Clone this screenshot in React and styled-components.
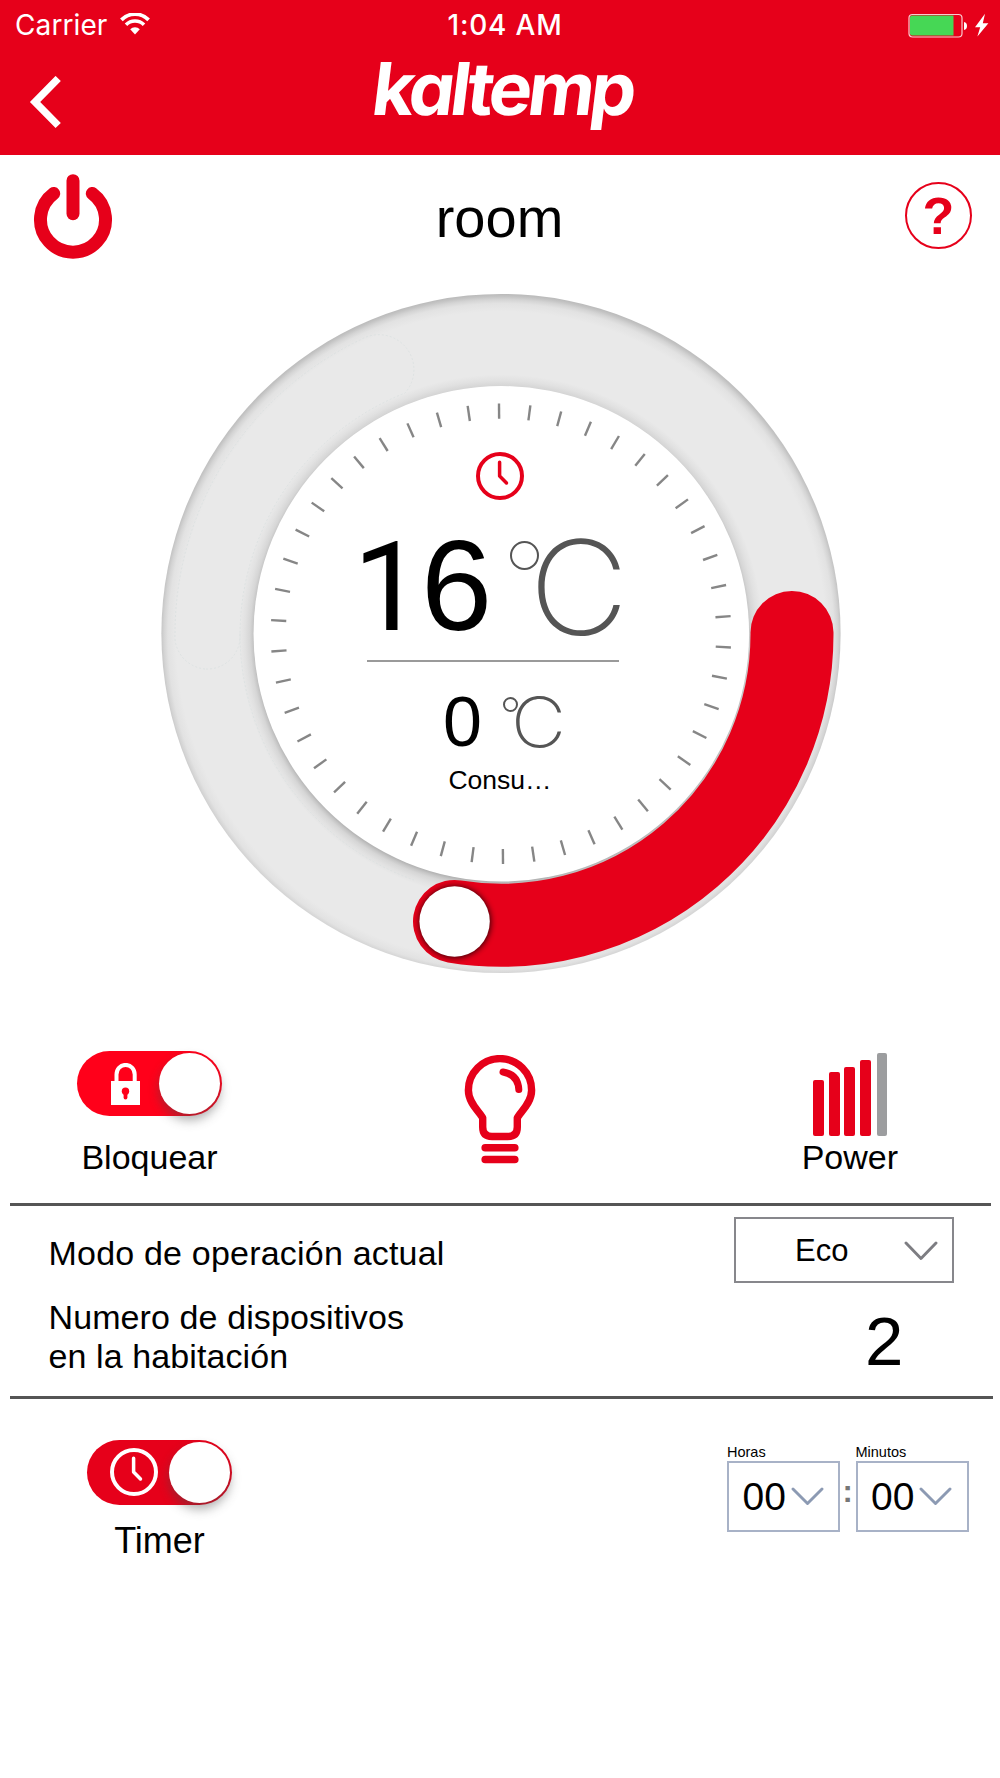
import styled, { createGlobalStyle } from 'styled-components'

const RED = '#e6001a'
const TICK_COUNT = 46

const App = () =>
  <>
    <GlobalStyle />
    <Screen>

      <Header>
        <StatusBar>
          <Carrier>Carrier <WifiIcon /></Carrier>
          <Clock>1:04 AM</Clock>
          <Battery><BatteryIcon /></Battery>
        </StatusBar>
        <NavBar>
          <BackIcon />
          <Logo>kaltemp</Logo>
        </NavBar>
      </Header>

      <TitleRow>
        <PowerIcon />
        <Title>room</Title>
        <Help>?</Help>
      </TitleRow>

      <Dial>
        <Ring />
        <Readout>
          <ClockIcon size={48} color={RED} />
          <Target>
            <One>1</One>
            <span>6</span>
            <Degree size={29} stroke={2.4} />
            <Unit size={131} weight={240} stretch={1.05}>C</Unit>
          </Target>
          <Separator />
          <Current>
            <span>0</span>
            <Degree size={15} stroke={2.6} />
            <Unit size={69} weight={200} stretch={1.1}>C</Unit>
          </Current>
          <Consumption>Consu…</Consumption>
        </Readout>
      </Dial>

      <Controls>
        <LockControl>
          <Toggle color="#ff001a" inset={34}>
            <LockIcon />
            <Knob />
          </Toggle>
          <Label>Bloquear</Label>
        </LockControl>
        <BulbIcon />
        <PowerControl>
          <Bars>
            {bars.map(bar => <Bar key={bar.height} {...bar} />)}
          </Bars>
          <Label>Power</Label>
        </PowerControl>
      </Controls>

      <Divider width={981} />

      <Settings>
        <Descriptions>
          <Mode>Modo de operación actual</Mode>
          <p>Numero de dispositivos<br />en la habitación</p>
        </Descriptions>
        <Values>
          <ModeSelect>
            <span>Eco</span>
            <Chevron width={34} height={20} color="#7d7d82" strokeWidth={2.9} />
          </ModeSelect>
          <DeviceCount>2</DeviceCount>
        </Values>
      </Settings>

      <Divider width={983} />

      <TimerRow>
        <TimerControl>
          <Toggle color={RED} inset={23}>
            <ClockIcon size={48} color="white" />
            <Knob />
          </Toggle>
          <TimerLabel>Timer</TimerLabel>
        </TimerControl>
        <TimePicker>
          <TimeField label="Horas" />
          <Colon>:</Colon>
          <TimeField label="Minutos" />
        </TimePicker>
      </TimerRow>

    </Screen>
  </>

const bars = [
  { height: 56, width: 11, gap: 5 },
  { height: 64, width: 11, gap: 4 },
  { height: 68.5, width: 11, gap: 5 },
  { height: 75.5, width: 11.5, gap: 5.5 },
  { height: 82.5, width: 10, gap: 0, off: true },
]

const TimeField = ({ label }) =>
  <Field>
    <FieldLabel>{label}</FieldLabel>
    <FieldBox>
      <span>00</span>
      <Chevron width={33} height={19} color="#8c9ab3" strokeWidth={2.9} />
    </FieldBox>
  </Field>

const WifiIcon = () =>
  <svg width="30" height="22" viewBox="0 0 30 22">
    <path d="M1.4 6.9A18.9 18.9 0 0 1 28.6 6.9" fill="none" stroke="white" strokeWidth="3.7" />
    <path d="M6 11.8A12.6 12.6 0 0 1 24 11.8" fill="none" stroke="white" strokeWidth="3.5" />
    <path d="M10.2 16.3A6.5 6.5 0 0 1 19.8 16.3L15 21.4Z" fill="white" />
  </svg>

const BatteryIcon = () =>
  <svg width="82" height="26" viewBox="0 0 82 26">
    <rect x="1" y="1.5" width="53" height="22.5" rx="3.5" fill="none" stroke="white" strokeOpacity=".8" strokeWidth="1.2" />
    <path d="M2 4.5Q2 2.6 4 2.6H45.5V22.6H4Q2 22.6 2 20.6Z" fill="#46d755" />
    <path d="M56 9Q59 9.5 59 13T56 17Z" fill="white" />
    <path d="M77 .8L67 14.2H72.2L69.4 23.6L80.4 10.2H74.8Z" fill="white" />
  </svg>

const BackIcon = () =>
  <svg width="34" height="54" viewBox="0 0 34 54">
    <path d="M29.2 2.5L6.1 26L29.2 49.5" fill="none" stroke="white" strokeWidth="7.4" />
  </svg>

const PowerIcon = () =>
  <svg width="80" height="88" viewBox="0 0 80 88" fill="none" stroke={RED} strokeWidth="13" strokeLinecap="round">
    <path d="M20.7 21.5A32.5 32.5 0 1 0 59.3 21.5" />
    <path d="M40 8.7V41.7" />
  </svg>

const ClockIcon = ({ size, color }) =>
  <svg width={size} height={size} viewBox="0 0 48 48" fill="none" stroke={color}>
    <circle cx="24" cy="24" r="22" strokeWidth="4" />
    <path d="M23.6 10.3V24L30.5 31" strokeWidth="3.5" strokeLinecap="round" strokeLinejoin="round" />
  </svg>

const LockIcon = () =>
  <svg width="29" height="42" viewBox="0 0 29 42">
    <path d="M5.5 19V11.5A9 9.5 0 0 1 23.7 11.5V19" fill="none" stroke="white" strokeWidth="4" />
    <rect y="18" width="29" height="24" fill="white" />
    <circle cx="14.5" cy="28.3" r="3.7" fill="#ff001a" />
    <path d="M14.5 28V34.5" stroke="#ff001a" strokeWidth="3.8" strokeLinecap="round" />
  </svg>

const BulbIcon = () =>
  <Bulb width="72" height="110" viewBox="0 0 72 110" fill="none" stroke={RED} strokeWidth="7.4">
    <path d="M28 81.5H44Q53.3 81.5 53.3 72V63C55 58 67.6 49 67.6 35.2A31.6 31.6 0 1 0 4.4 35.2C4.4 49 17 58 18.7 63V72Q18.7 81.5 28 81.5Z" />
    <path d="M39 17Q54 19.5 54.8 34.5" strokeWidth="7" strokeLinecap="round" />
    <path d="M21.2 92.8H50.8M21.2 104.5H50.8" strokeWidth="7.6" strokeLinecap="round" />
  </Bulb>

const Chevron = ({ width, height, color, strokeWidth }) =>
  <svg width={width} height={height} fill="none" stroke={color} strokeWidth={strokeWidth} strokeLinecap="round" strokeLinejoin="round">
    <path d={`M2 2L${width / 2} ${height - 2.5}L${width - 2} 2`} />
  </svg>

const ringStops = [
  [245, '#b0b0b0'], [248, '#c6c6c6'], [251, '#d6d6d6'], [256, '#e1e1e1'], [262, '#e9e9e9'],
  [325, '#e9e9e9'], [333, '#e2e2e2'], [337, '#d4d4d4'], [340, '#c4c4c4'], [344, '#b4b4b4'],
]

const Ring = () =>
  <svg width="700" height="700" viewBox="0 0 700 700">
    <defs>
      <radialGradient id="track" gradientUnits="userSpaceOnUse" cx="350" cy="352.5" r="344">
        {ringStops.map(([radius, color]) => <stop key={radius} offset={radius / 344} stopColor={color} />)}
      </radialGradient>
      <filter id="soft" x="-30%" y="-30%" width="160%" height="160%">
        <feGaussianBlur stdDeviation="3" />
      </filter>
      <clipPath id="cap">
        <circle cx="303.5" cy="637.5" r="41.5" />
        <rect x="303.5" y="590" width="60" height="92" />
      </clipPath>
    </defs>

    <circle cx="350" cy="349.5" r="339.6" fill="url(#track)" />
    <circle cx="350.3" cy="349.8" r="247.8" fill="white" />

    {/* seam left by the hidden part of the track */}
    <path
      d="M54 385A33 33 0 0 1 24 349.5A326 326 0 0 1 212 54.5A35 35 0 0 1 254 109A261 261 0 0 0 89 349.5A33 33 0 0 1 54 385M89 349.5A261 261 0 0 0 263 596"
      fill="none" stroke="#d9e0e0" strokeWidth=".8" strokeDasharray="2 2"
    />

    <path d="M641 348.5A291 291 0 0 1 303.5 637.5" fill="none" stroke={RED} strokeWidth="83" strokeLinecap="round" />
    <g clipPath="url(#cap)">
      <circle cx="304" cy="638" r="35.5" fill="black" opacity=".85" filter="url(#soft)" />
    </g>
    <circle cx="303.6" cy="637.5" r="35.2" fill="white" />

    {Array.from({ length: TICK_COUNT }, (_, i) =>
      <line
        key={i} x1="350" x2="350" y1="119.5" y2="134.7" stroke="#868686" strokeWidth="2.4"
        transform={`rotate(${i * 360 / TICK_COUNT - 0.5} 350 349.8)`}
      />)}
  </svg>

const GlobalStyle = createGlobalStyle`
  * {
    box-sizing: border-box;
  }

  body {
    margin: 0;
    background: white;
    color: black;
    font-family: 'Liberation Sans', Arial, sans-serif;
  }

  svg {
    display: block;
    flex: none;
  }

  p {
    margin: 0;
  }
`

const Screen = styled.main`
  width: 1000px;
  height: 1778px;
  overflow: hidden;
`

const Header = styled.header`
  height: 155px;
  background: ${RED};
  color: white;
`

const StatusBar = styled.div`
  height: 51px;
  display: grid;
  grid-template-columns: 1fr auto 1fr;
  align-items: center;
  padding: 0 10px 0 15px;
  font-family: Inter, sans-serif;
  font-size: 28px;
  line-height: 51px;
`

const Carrier = styled.div`
  display: flex;
  align-items: center;
  gap: 13px;
  letter-spacing: 0.1px;

  & > svg {
    margin-top: -4px;
  }
`

const Clock = styled.div`
  padding-left: 5px;
  font-weight: 550;
  letter-spacing: 0.8px;
`

const Battery = styled.div`
  display: flex;
  justify-content: flex-end;
`

const NavBar = styled.nav`
  height: 104px;
  display: flex;
  align-items: flex-start;
  padding: 0 0 0 29px;

  & > svg {
    margin-top: 25px;
  }
`

const Logo = styled.div`
  margin-left: 310px;
  font-family: Inter, sans-serif;
  font-size: 73px;
  font-weight: 650;
  font-feature-settings: 'cv11', 'ss03';
  line-height: 76px;
  letter-spacing: -4.3px;
  transform: skewX(-7deg);
`

const TitleRow = styled.section`
  height: 129px;
  display: flex;
  align-items: flex-start;
  justify-content: space-between;
  padding: 17px 28px 0 33px;
`

const Title = styled.h1`
  margin: 12px 19px 0 0;
  font-size: 56px;
  font-weight: 400;
  line-height: 68px;
`

const Help = styled.button`
  width: 67px;
  height: 67px;
  margin-top: 10px;
  padding: 0;
  border: 2.5px solid ${RED};
  border-radius: 50%;
  background: none;
  color: ${RED};
  font: bold 52px/60px 'Liberation Sans', Arial, sans-serif;
`

const Dial = styled.section`
  display: grid;
  width: 700px;
  height: 700px;
  margin-left: 151px;

  & > * {
    grid-area: 1 / 1;
  }
`

const Readout = styled.div`
  display: flex;
  flex-direction: column;
  align-items: center;
  width: 698px;
  padding-top: 168px;
`

const Target = styled.div`
  align-self: flex-start;
  display: flex;
  height: 130px;
  margin-top: 21px;
  padding-left: 202px;
  font-size: 128px;
  line-height: 130px;
`

const One = styled.span`
  width: 68px;
  font-family: Roboto, sans-serif;
  font-size: 125px;
  line-height: 133px;
`

const Degree = styled.i`
  width: ${props => props.size}px;
  height: ${props => props.size}px;
  margin: 20px 0 0 18px;
  border: ${props => props.stroke}px solid #555;
  border-radius: 50%;
`

const Unit = styled.span`
  margin-left: -10px;
  padding-top: 2px;
  color: #555;
  font-family: Inter, sans-serif;
  font-size: ${props => props.size}px;
  font-weight: ${props => props.weight};
  transform: scaleX(${props => props.stretch});
  transform-origin: left;
`

const Separator = styled.div`
  width: 252px;
  height: 2px;
  margin: 9px 0 0 -15px;
  background: #9a9a9a;
`

const Current = styled.div`
  align-self: flex-start;
  display: flex;
  height: 70px;
  margin-top: 25px;
  padding-left: 292px;
  font-size: 70px;
  line-height: 71px;

  & > ${Degree} {
    margin: 9.5px 0 0 21px;
  }

  & > ${Unit} {
    margin-left: -7px;
    padding-top: 0;
  }
`

const Consumption = styled.div`
  margin-top: 8px;
  font-size: 26.5px;
  line-height: 30px;
`

const Controls = styled.section`
  display: flex;
  justify-content: space-between;
  align-items: flex-start;
  height: 219px;
  padding: 67px 102px 0 77px;
`

const LockControl = styled.div`
  width: 145px;
`

const Toggle = styled.div`
  display: flex;
  align-items: center;
  justify-content: space-between;
  width: 145px;
  height: 65px;
  padding: 0 2px 0 ${props => props.inset}px;
  border-radius: 33px;
  background: ${props => props.color};
`

const Knob = styled.div`
  width: 61px;
  height: 61px;
  border-radius: 50%;
  background: white;
  box-shadow: 0 6px 11px rgba(70, 70, 70, 0.45);
`

const Label = styled.div`
  margin-top: 21px;
  text-align: center;
  font-size: 34px;
  line-height: 40px;
`

const Bulb = styled.svg`
  margin: 4px 24px 0 0;
`

const PowerControl = styled.div`
  display: flex;
  flex-direction: column;
  align-items: center;

  & > ${Label} {
    margin-top: 0;
  }
`

const Bars = styled.div`
  display: flex;
  align-items: flex-end;
  height: 84.5px;
  margin-bottom: 1.5px;
`

const Bar = styled.i`
  width: ${props => props.width}px;
  height: ${props => props.height}px;
  margin-right: ${props => props.gap}px;
  border-radius: 2px;
  background: ${props => props.off ? '#9c9d9f' : RED};
`

const Divider = styled.hr`
  width: ${props => props.width}px;
  height: 2.5px;
  margin: 0 0 0 10px;
  border: 0;
  background: #555;
`

const Settings = styled.section`
  display: flex;
  justify-content: space-between;
  height: 190.5px;
  padding: 11.5px 46px 0 48.5px;
`

const Descriptions = styled.div`
  display: flex;
  flex-direction: column;
  gap: 25px;
  padding-top: 16.5px;
  font-size: 34px;
  line-height: 39px;
  letter-spacing: 0.1px;
`

const Mode = styled.p`
  letter-spacing: 0.2px;
`

const Values = styled.div`
  width: 220px;
`

const ModeSelect = styled.div`
  display: flex;
  align-items: center;
  justify-content: space-between;
  height: 66px;
  padding: 1px 14px 0 59px;
  border: 2px solid #87878c;
  font-size: 31px;
`

const DeviceCount = styled.div`
  margin-top: 24px;
  padding-left: 131px;
  font-size: 69px;
  line-height: 70px;
`

const TimerRow = styled.section`
  display: flex;
  justify-content: space-between;
  padding: 41px 31.5px 0 87px;
`

const TimerControl = styled.div`
  width: 145px;
`

const TimerLabel = styled(Label)`
  margin-top: 16px;
  font-size: 36px;
`

const TimePicker = styled.div`
  display: flex;
  padding-top: 4px;
`

const Field = styled.div`
  width: 113px;
`

const FieldLabel = styled.div`
  font-size: 14.5px;
  line-height: 17px;
`

const FieldBox = styled.div`
  display: flex;
  align-items: center;
  gap: 5px;
  height: 71px;
  padding: 1px 0 0 13.5px;
  border: 2px solid #a8b2c7;
  font-size: 39px;
`

const Colon = styled.div`
  width: 15.5px;
  padding-top: 28px;
  text-align: center;
  color: #777;
  font-size: 31px;
  font-weight: 700;
  line-height: 40px;
`

export default App
